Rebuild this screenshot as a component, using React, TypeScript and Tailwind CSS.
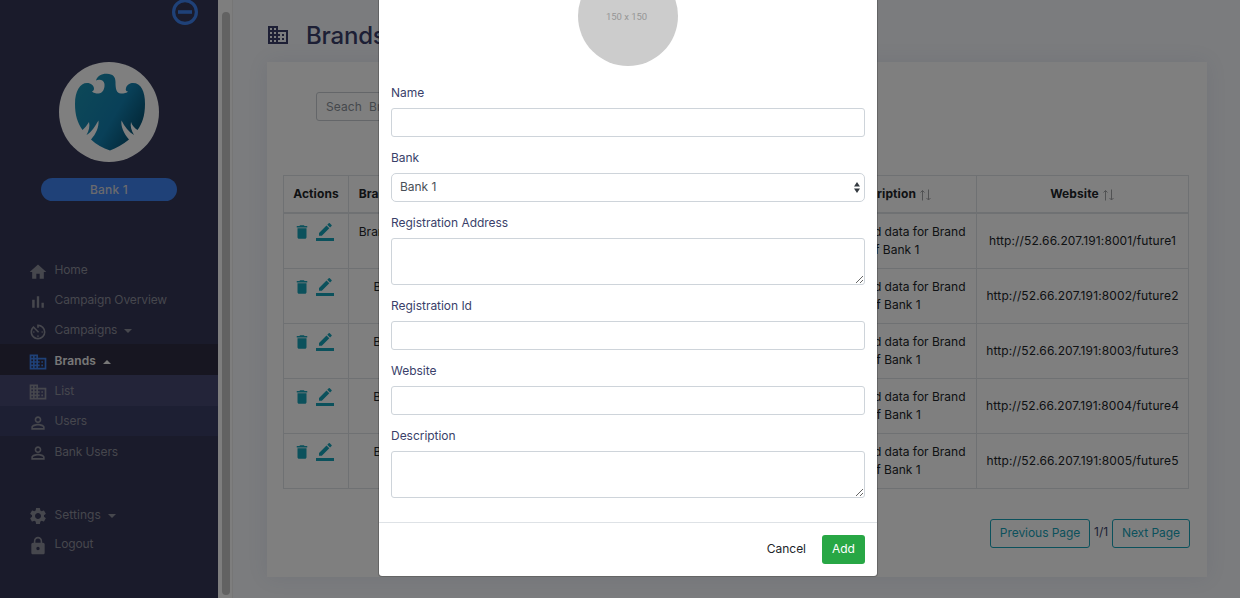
import type { ReactNode } from "react";
import {
  MdHome,
  MdAvTimer,
  MdBusiness,
  MdPersonOutline,
  MdSettings,
  MdLock,
  MdDelete,
} from "react-icons/md";

function BarsIcon() {
  return (
    <svg viewBox="0 0 24 24" width="20" height="20" fill="currentColor">
      <path d="M5 9.2h3V19H5zM10.6 5h2.8v14h-2.8zm5.6 8H19v6h-2.8z" />
    </svg>
  );
}

function EditIcon() {
  return (
    <svg viewBox="0 0 24 24" width="18" height="18" fill="currentColor">
      <path d="M17.75 7L14 3.25l-10 10V17h3.75l10-10zm2.96-2.96a.996.996 0 0 0 0-1.41L18.37.29a.996.996 0 0 0-1.41 0L15 2.25 18.75 6l1.96-1.96z" />
      <path d="M0 20h24v4H0z" />
    </svg>
  );
}

function CollapseIcon() {
  return (
    <svg viewBox="0 0 26 26" width="26" height="26" fill="none" stroke="#3e82f0">
      <circle cx="13" cy="13" r="11.4" strokeWidth="3.2" />
      <path d="M6 13h14" strokeWidth="3.6" />
    </svg>
  );
}

function SortIcon() {
  return (
    <svg viewBox="0 0 12 12" width="12" height="12" fill="none" stroke="currentColor" strokeWidth="1" className="mt-[3px]">
      <path d="M2.5 11.5V1.5M.5 3.5l2-2 2 2M8.5 .5v10.5M6.5 9l2 2 2-2" />
    </svg>
  );
}

function EagleLogo() {
  return (
    <svg viewBox="0 0 100 100" className="size-[100px]">
      <defs>
        <linearGradient id="eagle" x1="0" y1="0.1" x2="1" y2="0.75">
          <stop offset="0" stopColor="#1c92b0" />
          <stop offset="0.6" stopColor="#1280b0" />
          <stop offset="1" stopColor="#044a68" />
        </linearGradient>
      </defs>
      <circle cx="50" cy="50" r="50" fill="#fff" />
      <path
        fill="url(#eagle)"
        d="M37 18.5C38 14 43 11.5 48 11.8C54 12 56.5 15 56.5 20C56.5 26 57 31.5 62 31.5C65 31.5 68 31 69 29.5C67 29.5 66.3 28 67 26C68 22.5 71 21 74 21C82 21 86 29 86 42C86 54 83 62 78.5 68C75.500 66 73 63.500 72 60C71 64 72.500 69 75 73C70 70 65.500 65 62.500 58.500C61.500 64 65 72 70 77.500C64 82.500 57 86 51 88.500C44 86 37 82.500 32 77.500C37 72 40 65 39.500 58.500C36 64 33 70 27.500 73C30 69 31 64 30 60C28 63 26 66 23.500 68C18.500 61 16 53 16 42C16 29 21 21 28 21C32 21 35 23.500 35 26.500C35 28.500 34 29 33 29.500C34.500 31 36.500 31.500 39.500 31.500C43.500 31.500 45.800 27 45.500 22.500C45.300 18 40 17 37 18.500Z"
      />
    </svg>
  );
}

function Caret({ up }: { up?: boolean }) {
  return (
    <svg viewBox="0 0 8 4" width="8" height="4" fill="currentColor" className="ml-[7px] mt-[3px]">
      <path d={up ? "M0 4L4 0l4 4z" : "M0 0l4 4 4-4z"} />
    </svg>
  );
}

function NavItem({ icon, label, caret, row, iconClass }: {
  icon: ReactNode;
  label: string;
  caret?: "up" | "down";
  row: string;
  iconClass?: string;
}) {
  return (
    <li className={`flex items-center pl-[28px] ${row}`}>
      <span className={`mr-[6.5px] mt-[3px] ${iconClass ?? ""}`}>{icon}</span>
      <span>{label}</span>
      {caret && <Caret up={caret === "up"} />}
    </li>
  );
}

function Sidebar() {
  return (
    <aside className="h-full w-[218px] shrink-0 bg-[#343656] text-[12px] tracking-[-0.12px] text-[#8d8e9b]">
      <div className="flex h-[62px] justify-end pr-[20px]">
        <div className="-mt-px">
          <CollapseIcon />
        </div>
      </div>
      <div className="ml-[59px]">
        <EagleLogo />
      </div>
      <div className="mt-4 ml-[41px] flex h-[23px] w-[136px] items-center justify-center rounded-full bg-[#3e82f0] font-medium tracking-[0.2px] text-[#d4d4dc]">
        Bank 1
      </div>
      <ul className="mt-[54px]">
        <NavItem icon={<MdHome size={20} />} label="Home" row="h-[30px]" />
        <NavItem icon={<BarsIcon />} label="Campaign Overview" row="h-[30px]" />
        <NavItem icon={<MdAvTimer size={20} />} label="Campaigns" caret="down" row="h-[29px]" iconClass="relative top-px" />
        <NavItem
          icon={<MdBusiness size={20} />}
          label="Brands"
          caret="up"
          row="h-[31px] bg-[#2e2d42] pt-[2px] font-semibold tracking-[0.1px] text-[#f0f0f0]"
          iconClass="text-[#3e82f0]"
        />
        <NavItem icon={<MdBusiness size={20} />} label="List" row="h-[31px] bg-[#474973]" />
        <NavItem icon={<MdPersonOutline size={20} />} label="Users" row="h-[30px] bg-[#3b3f66]" />
        <NavItem icon={<MdPersonOutline size={20} />} label="Bank Users" row="h-[30px] pt-px" />
        <NavItem icon={<MdSettings size={20} />} label="Settings" caret="down" row="mt-[34px] h-[29px] tracking-[0.05px]" />
        <NavItem icon={<MdLock size={20} />} label="Logout" row="h-[30px]" />
      </ul>
    </aside>
  );
}

const rows = [1, 2, 3, 4, 5];

function BrandTable() {
  return (
    <table className="w-[906px] table-fixed border-collapse text-center text-[12px] leading-[18px] text-[#212529]">
      <colgroup>
        <col className="w-[65px]" />
        <col className="w-[109px]" />
        <col className="w-[180px]" />
        <col className="w-[165px]" />
        <col className="w-[174px]" />
        <col className="w-[212px]" />
      </colgroup>
      <thead>
        <tr className="h-[37px]">
          {["Actions", "Brand Name", "Bank", "Registration Id", "Description", "Website"].map((name) => (
            <th key={name} className="border border-b-2 border-[#dee2e6] font-bold tracking-[0.1px]">
              <div className="flex items-center justify-center gap-1">
                <span>{name}</span>
                {name !== "Actions" && (
                  <span className="text-[#a2a4a6]">
                    <SortIcon />
                  </span>
                )}
              </div>
            </th>
          ))}
        </tr>
      </thead>
      <tbody>
        {rows.map((n) => (
          <tr key={n} className={n === 1 ? "h-[56px]" : "h-[55px]"}>
            <td className="border border-[#dee2e6] align-top">
              <div className="flex gap-[5px] pt-[9px] pl-[9px] text-[#17a2b8]">
                <MdDelete size={18} />
                <EditIcon />
              </div>
            </td>
            <td className="border border-[#dee2e6]">
              {n === 1 ? "Brand 1 of Bank" : `Brand ${n} of`}
              <br />
              {"\u00a0"}
            </td>
            <td className="border border-[#dee2e6]" />
            <td className="border border-[#dee2e6]" />
            <td className="border border-[#dee2e6]">
              This is seed data for Brand
              <br />
              {n} of Bank 1
            </td>
            <td className="border border-[#dee2e6] tracking-[0.12px]">{`http://52.66.207.191:800${n}/future${n}`}</td>
          </tr>
        ))}
      </tbody>
    </table>
  );
}

function Brands() {
  return (
    <main className="h-full grow bg-[#f6f8fc] pl-[34px]">
      <h1 className="-ml-px flex h-[62px] items-center gap-[16px] text-[24px] font-medium text-[#3a3f6a]">
        <MdBusiness size={24} className="mt-[8px]" />
        <span className="mt-[9px] tracking-[-0.2px]">Brands</span>
      </h1>
      <section className="h-[515px] w-[940px] bg-white px-4 shadow-[0_0_20px_rgba(60,80,140,0.09)]">
        <div className="h-[113px] pt-[30px] pl-[33px]">
          <input
            placeholder="Seach  Brand"
            className="h-[29px] w-[200px] rounded-[3px] border border-[#c8ccd2] px-[9px] text-[12px] tracking-[0.1px] whitespace-pre placeholder:text-[#8b929a]"
          />
        </div>
        <BrandTable />
        <div className="mt-[30px] flex items-center justify-end gap-[4px] pr-px text-[12px] tracking-[-0.05px] text-[#17a2b8]">
          <button className="h-[29px] w-[100px] rounded-[3px] border border-[#17a2b8] pb-[2px]">Previous Page</button>
          <span className="pb-[3px] text-[#3a3f6a]">1/1</span>
          <button className="h-[29px] w-[78px] rounded-[3px] border border-[#17a2b8] pb-[2px]">Next Page</button>
        </div>
      </section>
    </main>
  );
}

function Field({ label, children }: { label: string; children: ReactNode }) {
  return (
    <label className="mb-[12px] flex flex-col gap-[6px]">
      <span className="leading-[18px] text-[#3a3f6a]">{label}</span>
      {children}
    </label>
  );
}

const control = "block w-full rounded-[3px] border border-[#ced4da] bg-white";

function BrandDialog() {
  return (
    <div className="absolute top-0 left-[378px] w-[500px] rounded-b-[4px] border border-t-0 border-black/20 bg-white bg-clip-padding text-[12px] tracking-[-0.03px]">
      <form className="h-[522px] overflow-hidden px-[12px]">
        <div className="mx-auto -mt-[34px] mb-[18px] flex size-[100px] items-center justify-center rounded-full bg-[#ccc] pt-[3px] pr-[3px] font-[Roboto] text-[9.5px] text-[#969696]">
          150 x 150
        </div>
        <Field label="Name">
          <input className={`${control} h-[29px]`} />
        </Field>
        <Field label="Bank">
          <div className={`${control} flex h-[29px] items-center justify-between rounded-[5px] pr-[4px] pb-[2px] pl-[8px] text-[#495057]`}>
            <span>Bank 1</span>
            <svg viewBox="0 0 6 11" width="6" height="11" fill="#343a40" className="mt-[2px]">
              <path d="M3 0l3 4.5H0zM0 6.5h6L3 11z" />
            </svg>
          </div>
        </Field>
        <Field label="Registration Address">
          <textarea className={`${control} h-[47px]`} />
        </Field>
        <Field label="Registration Id">
          <input className={`${control} h-[29px]`} />
        </Field>
        <Field label="Website">
          <input className={`${control} h-[29px]`} />
        </Field>
        <Field label="Description">
          <textarea className={`${control} h-[47px]`} />
        </Field>
      </form>
      <div className="flex h-[54px] items-center justify-end gap-[16px] border-t border-[#dee2e6] pr-[12px]">
        <button className="pb-[2px] text-[#212529]">Cancel</button>
        <button className="h-[29px] w-[43px] rounded-[3px] bg-[#28a745] pb-[2px] text-white">Add</button>
      </div>
    </div>
  );
}

export default function App() {
  return (
    <div className="relative h-[598px] w-[1240px] overflow-hidden font-[Inter,sans-serif]">
      <div className="flex h-full">
        <Sidebar />
        <div className="flex h-full w-[15px] shrink-0 border-r border-[#ededed] bg-[#fcfcfc] pt-[12px] pb-[3px] pl-[4px]">
          <div className="w-[8px] rounded-full bg-[#c4c4c4]" />
        </div>
        <Brands />
      </div>
      <div className="absolute inset-0 bg-black/50" />
      <BrandDialog />
    </div>
  );
}
